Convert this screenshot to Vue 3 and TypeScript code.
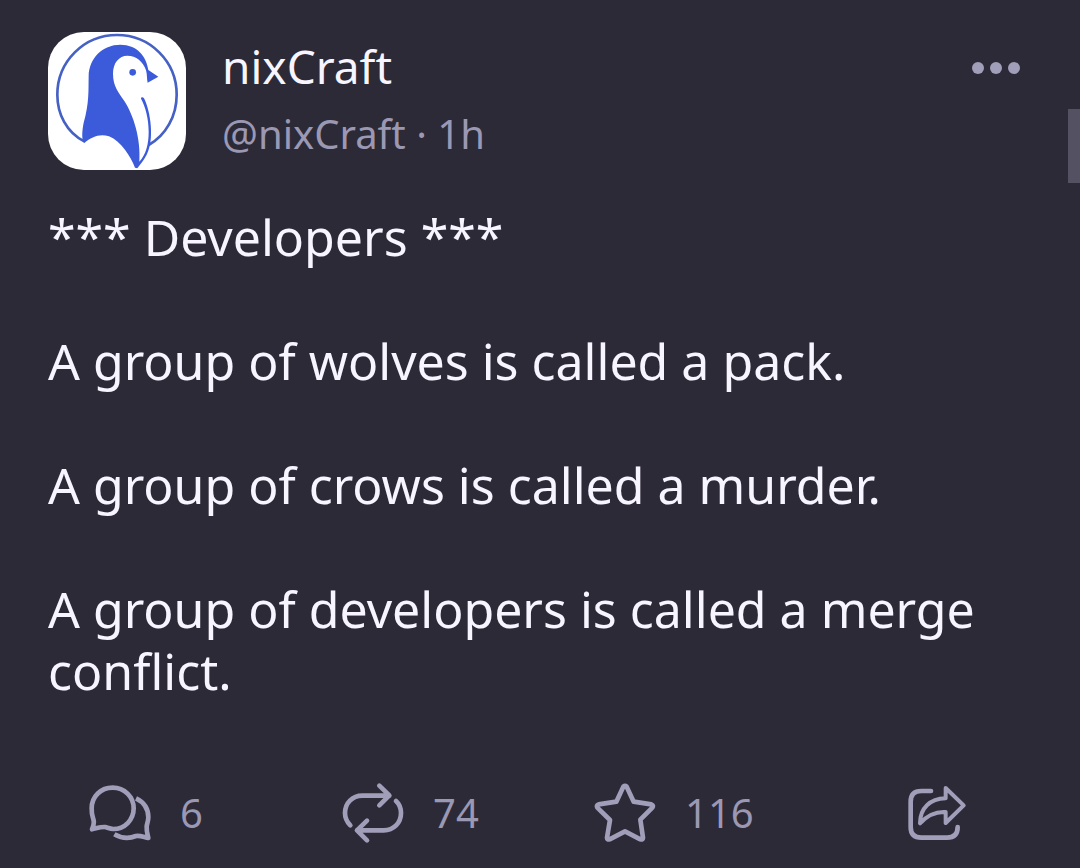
<script setup lang="ts">
interface Post {
  name: string
  handle: string
  age: string
  paragraphs: string[]
  replies: number
  boosts: number
  stars: number
}

const post: Post = {
  name: 'nixCraft',
  handle: '@nixCraft',
  age: '1h',
  paragraphs: [
    '*** Developers ***',
    'A group of wolves is called a pack.',
    'A group of crows is called a murder.',
    'A group of developers is called a merge conflict.',
  ],
  replies: 6,
  boosts: 74,
  stars: 116,
}
</script>

<template>
  <main class="page">
    <article class="post">
      <header class="head">
        <svg class="avatar" viewBox="24 24 414 414" role="img" aria-label="nixCraft avatar">
          <rect x="24" y="24" width="414" height="414" fill="#fff" />
          <path d="M134 353 C78 325 52 268 52 212 C52 112 132 33 231 33 C330 33 410 112 410 212 C410 276 378 334 326 363" fill="none" stroke="#4661c4" stroke-width="8" />
          <path d="M133 357 C124 350 126 320 131 296 C148 238 145 196 146 156 C147 103 187 62 241 62 C291 62 319 96 325 138 L355 158 L323 176 C320 166 322 151 318 139 C310 113 288 95 262 95 C237 95 219 117 219 149 C219 188 236 205 253 231 C281 274 303 346 298 413 C318 391 326 361 326 323 C326 284 317 250 303 224 C303 219 309 218 312 223 C332 262 344 348 320 392 C311 410 301 420 292 433 L285 431 C272 398 244 352 207 337 C178 328 155 339 133 357 Z" fill="#3b5bdb" />
          <circle cx="278" cy="145" r="10" fill="#3b5bdb" />
        </svg>
        <div class="who">
          <h1 class="name">{{ post.name }}</h1>
          <p class="meta">{{ post.handle }} · {{ post.age }}</p>
        </div>
        <button class="more" type="button" aria-label="More options">
          <span class="dot"></span><span class="dot"></span><span class="dot"></span>
        </button>
      </header>

      <div class="body">
        <p v-for="text in post.paragraphs" :key="text">{{ text }}</p>
      </div>

      <footer class="actions">
        <button class="action" type="button" aria-label="Reply">
          <svg class="icon" viewBox="24 33 192 192" aria-hidden="true">
            <path d="M36 178 C44 160 42 152 38 140 C35 132 35 124 35 115 C35 79 63 53 98 53 C133 53 161 80 161 115 C161 150 134 177 100 177 C91 177 83 173 75 171 C62 170 50 175 36 178 Z" />
            <path d="M168 85 C191 96 205 117 205 142 C205 153 201 161 200 169 C199 182 202 192 205 204 C193 202 181 196 168 198 C147 207 124 205 103 193" stroke-linecap="butt" />
          </svg>
          <span>{{ post.replies }}</span>
        </button>
        <button class="action" type="button" aria-label="Boost">
          <svg class="icon" viewBox="33 33 192 192" aria-hidden="true">
            <path d="M61 166 C51 156 45 145 45 129 C45 99 67 77 97 77 H178 M148 47 L178 76 L148 106" />
            <path d="M198 93 C208 102 213 114 213 129 C213 159 191 181 161 181 H81 M111 152 L81 181 L111 211" />
          </svg>
          <span>{{ post.boosts }}</span>
        </button>
        <button class="action" type="button" aria-label="Favourite">
          <svg class="icon" viewBox="39 33 192 192" aria-hidden="true">
            <path d="M130 50 Q135 46 140 50 L161 95 L214 103 Q222 106 217 113 L181 149 L189 203 Q189 210 181 208 L135 184 L89 208 Q81 210 81 203 L90 150 L52 113 Q48 106 56 103 L109 95 Z" />
          </svg>
          <span>{{ post.stars }}</span>
        </button>
        <button class="action" type="button" aria-label="Share">
          <svg class="icon" viewBox="46 33 192 192" aria-hidden="true">
            <path d="M124 63 H95 Q63 63 63 95 V171 Q63 203 95 203 H172 Q204 203 204 171" />
            <path d="M168 54 L222 106 L168 159 V126 C134 124 111 138 91 160 C91 114 121 86 168 85 Z" stroke-width="12" />
          </svg>
        </button>
      </footer>
    </article>
    <div class="thumb" aria-hidden="true"></div>
  </main>
</template>

<style>
body {
  margin: 0;
  background: #2c2a37;
}
</style>

<style scoped>
.page {
  position: relative;
  min-height: 100vh;
  box-sizing: border-box;
  background: #2c2a37;
  color: #f7f5ff;
  font-family: "Noto Sans", "Open Sans", sans-serif;
}

.post {
  padding-top: 32px;
}

.head {
  display: flex;
  align-items: flex-start;
  padding: 0 60px 0 48px;
}

.avatar {
  flex: none;
  width: 138px;
  height: 138px;
  border-radius: 36px;
}

.who {
  flex: 1;
  margin-left: 36px;
}

.name,
.meta {
  margin: 0;
  font-weight: 400;
  white-space: nowrap;
}

.name {
  font-size: 46px;
  line-height: 68px;
}

.meta {
  color: #9b98b3;
  font-size: 40px;
  line-height: 68px;
}

.more {
  display: flex;
  gap: 6px;
  margin: 0;
  padding: 30px 0;
  border: 0;
  background: none;
  cursor: pointer;
}

.dot {
  width: 12px;
  height: 12px;
  border-radius: 50%;
  background: #a19eba;
}

.body {
  display: flex;
  flex-direction: column;
  gap: 62px;
  padding: 36px 48px 0;
  font-size: 50px;
  line-height: 62px;
}

.body p {
  margin: 0;
}

.actions {
  display: grid;
  grid-template-columns: 253fr 252fr 312fr auto;
  padding: 79px 111px 16px 88px;
}

.action {
  display: flex;
  align-items: center;
  gap: 28px;
  margin: 0;
  padding: 0;
  border: 0;
  background: none;
  color: #9b98b3;
  font-family: inherit;
  font-size: 40px;
  line-height: 64px;
  cursor: pointer;
}

.icon {
  flex: none;
  width: 64px;
  height: 64px;
  fill: none;
  stroke: #a19eba;
  stroke-width: 14;
  stroke-linecap: round;
  stroke-linejoin: round;
}

.thumb {
  position: absolute;
  top: 109px;
  right: 0;
  width: 12px;
  height: 74px;
  background: #545163;
}
</style>
